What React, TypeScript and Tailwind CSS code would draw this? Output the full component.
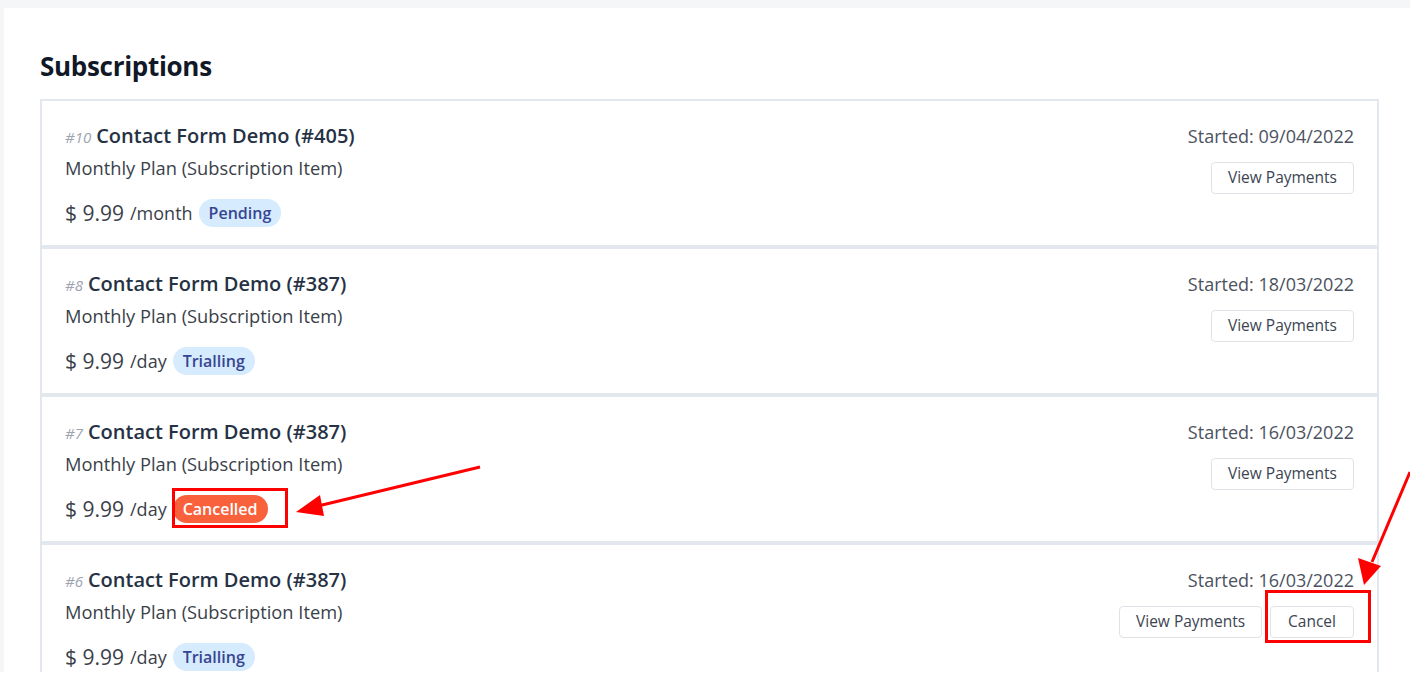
const subscriptions = [
  { id: 10, form: "#405", interval: "/month", status: "Pending", started: "09/04/2022", canCancel: false },
  { id: 8, form: "#387", interval: "/day", status: "Trialling", started: "18/03/2022", canCancel: false },
  { id: 7, form: "#387", interval: "/day", status: "Cancelled", started: "16/03/2022", canCancel: false },
  { id: 6, form: "#387", interval: "/day", status: "Trialling", started: "16/03/2022", canCancel: true },
];

function StatusBadge({ status }: { status: string }) {
  if (status === "Cancelled") {
    return (
      <span className="ml-[6px] inline-flex h-[28px] items-center rounded-full bg-[#f9603c] px-[10px] text-[16px] font-semibold text-white">
        {status}
      </span>
    );
  }
  return (
    <span className="ml-[6px] inline-flex h-[28px] items-center rounded-full bg-[#d6ebfd] px-[10px] text-[16px] font-semibold text-[#374592]">
      {status}
    </span>
  );
}

// red call-outs drawn on top of the screenshot
function Annotations() {
  return (
    <svg className="pointer-events-none absolute left-0 top-0" width="1410" height="697">
      <rect x="173.5" y="489.5" width="113" height="37" fill="none" stroke="#f00" strokeWidth="3" />
      <line x1="480" y1="467" x2="318" y2="506" stroke="#f00" strokeWidth="3" />
      <polygon points="296,512 320,495 324,516" fill="#f00" />
      <rect x="1266.5" y="591.5" width="103" height="50" fill="none" stroke="#f00" strokeWidth="3" />
      <line x1="1410" y1="472" x2="1372" y2="562" stroke="#f00" strokeWidth="3" />
      <polygon points="1364,585 1358,558 1381,566" fill="#f00" />
    </svg>
  );
}

export default function App() {
  return (
    <div
      className="relative h-[697px] w-[1410px] overflow-hidden bg-white"
      style={{ fontFamily: '"Open Sans", "Noto Sans", sans-serif' }}
    >
      <div className="h-[672px] overflow-hidden bg-[#f5f6f8] pl-[4px] pt-[8px]">
        <div className="h-[700px] bg-white pl-[36px] pr-[31px] pt-[42px]">
          <h2 className="text-[26px] font-bold leading-[32px] tracking-[-0.3px] text-[#111827]">
            Subscriptions
          </h2>
          <div className="mt-[17px] border-2 border-[#e3e8ef] bg-[#e3e8ef]">
            {subscriptions.map((sub, i) => (
              <div
                className={`flex h-[144px] justify-between bg-white pl-[23px] pr-[23px] pt-[20px] ${i > 0 ? "mt-[4px]" : ""}`}
                key={sub.id}
              >
                <div>
                  <p className="text-[20px] font-semibold leading-[30px] text-[#263244]">
                    <span className="mr-[5px] text-[15px] font-normal italic text-[#9ca3af]">#{sub.id}</span>
                    Contact Form Demo ({sub.form})
                  </p>
                  <p className="mt-[3px] text-[18.3px] leading-[26px] text-[#3a3f4a]">
                    Monthly Plan (Subscription Item)
                  </p>
                  <div className="mt-[17px] flex items-center text-[#3a3f4a]">
                    <span className="text-[21px] leading-[30px]">$ 9.99</span>
                    <span className="ml-[6px] text-[18px] leading-[30px]">{sub.interval}</span>
                    <StatusBadge status={sub.status} />
                  </div>
                </div>
                <div className="flex flex-col items-end">
                  <p className="text-[18px] leading-[30px] text-[#4b5260]">Started: {sub.started}</p>
                  <div className="mt-[11px] flex gap-[8px]">
                    <button className="h-[32px] rounded-[4px] border border-[#dfe3e8] bg-white px-[16px] text-[15.5px] font-medium text-[#3c4452]">
                      View Payments
                    </button>
                    {sub.canCancel && (
                      <button className="h-[32px] rounded-[4px] border border-[#dfe3e8] bg-white px-[17px] text-[15.5px] font-medium text-[#3c4452]">
                        Cancel
                      </button>
                    )}
                  </div>
                </div>
              </div>
            ))}
          </div>
        </div>
      </div>
      <Annotations />
    </div>
  );
}
